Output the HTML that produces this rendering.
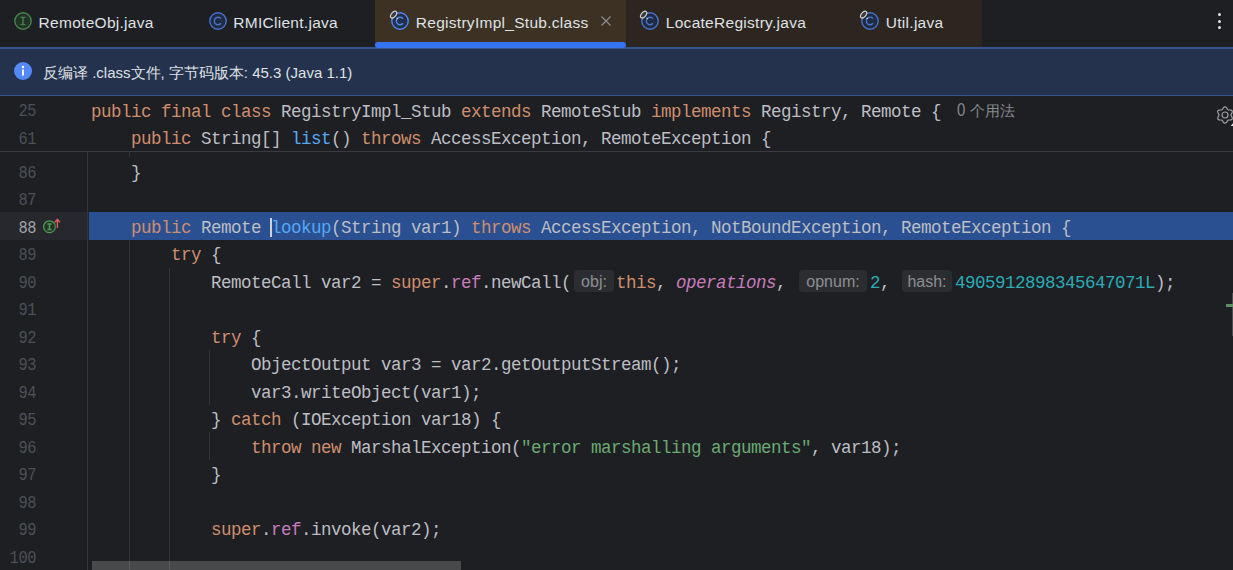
<!DOCTYPE html>
<html><head><meta charset="utf-8"><style>
html,body{margin:0;padding:0}
body{width:1233px;height:570px;overflow:hidden;background:#1e1f22;position:relative;font-family:"Liberation Sans",sans-serif}
.abs{position:absolute}
.tabt{position:absolute;top:12.6px;font-size:15.5px;letter-spacing:0.28px;line-height:19px;color:#dfe1e5;white-space:pre}
.row{position:absolute;left:91px;height:27.5px;line-height:27.5px;font-family:"Liberation Mono",monospace;font-size:17.5px;letter-spacing:-0.502px;color:#bcbec4;white-space:pre}
.ln{position:absolute;left:0;width:36px;text-align:right;height:27.5px;line-height:27.5px;font-family:"Liberation Mono",monospace;font-size:17.5px;letter-spacing:-0.502px;color:#4b5059;white-space:pre}
.ln.cur{color:#a1a3ab}
.ln span.d{display:inline-block;transform:scaleX(0.88);transform-origin:100% 50%}
.inl{display:inline-block;vertical-align:top;margin-top:0px;height:22px;line-height:23.6px;border-radius:4px;background:#2b2d30;color:#8c8f94;font-family:"Liberation Sans",sans-serif;font-size:16px;letter-spacing:0;text-align:center}
.usage{position:relative;top:-1px;font-family:"Liberation Sans",sans-serif;font-size:15px;letter-spacing:0;color:#868a91;margin-left:16px}
</style></head><body>
<!-- tab bar -->
<div class="abs" style="left:375px;top:0;width:251px;height:47px;background:#3d3124"></div>
<div class="abs" style="left:626px;top:0;width:356px;height:47px;background:#2d2620"></div>

<svg width="22" height="22" viewBox="0 0 22 22" style="position:absolute;left:12px;top:10px">
<circle cx="11" cy="11" r="8.2" fill="#223225" stroke="#47834e" stroke-width="1.4"/>
<path d="M8.6 7.4 H13.4 M11 7.4 V14.6 M8.6 14.6 H13.4" fill="none" stroke="#47834e" stroke-width="1.4"/>
</svg><div class="tabt" style="left:38.6px">RemoteObj.java</div><svg width="22" height="22" viewBox="0 0 22 22" style="position:absolute;left:207px;top:10px">
<circle cx="11" cy="11" r="8.2" fill="#202a40" stroke="#4673cb" stroke-width="1.4"/>
<path d="M13.92 8.72 A3.7 3.7 0 1 0 13.92 13.28" fill="none" stroke="#4673cb" stroke-width="1.45"/>
</svg><div class="tabt" style="left:233.3px">RMIClient.java</div><svg width="22" height="22" viewBox="0 0 22 22" style="position:absolute;left:389px;top:10px">
<circle cx="11" cy="11" r="8.2" fill="#24304a" stroke="#4f86f0" stroke-width="1.4"/>
<path d="M13.92 8.72 A3.7 3.7 0 1 0 13.92 13.28" fill="none" stroke="#4f86f0" stroke-width="1.45"/>
<ellipse cx="4.6" cy="4.6" rx="4.0" ry="2.3" transform="rotate(-48 4.6 4.6)" fill="#3b3b3d" stroke="#d0d2d6" stroke-width="1.2"/><path d="M7.2 7.6 L9.4 8.2 L8.0 9.6 Z" fill="#d0d2d6"/></svg><div class="tabt" style="left:415.8px">RegistryImpl_Stub.class</div><svg width="22" height="22" viewBox="0 0 22 22" style="position:absolute;left:639px;top:10px">
<circle cx="11" cy="11" r="8.2" fill="#202a40" stroke="#4673cb" stroke-width="1.4"/>
<path d="M13.92 8.72 A3.7 3.7 0 1 0 13.92 13.28" fill="none" stroke="#4673cb" stroke-width="1.45"/>
<ellipse cx="4.6" cy="4.6" rx="4.0" ry="2.3" transform="rotate(-48 4.6 4.6)" fill="#3b3b3d" stroke="#d0d2d6" stroke-width="1.2"/><path d="M7.2 7.6 L9.4 8.2 L8.0 9.6 Z" fill="#d0d2d6"/></svg><div class="tabt" style="left:665.8px">LocateRegistry.java</div><svg width="22" height="22" viewBox="0 0 22 22" style="position:absolute;left:859px;top:10px">
<circle cx="11" cy="11" r="8.2" fill="#202a40" stroke="#4673cb" stroke-width="1.4"/>
<path d="M13.92 8.72 A3.7 3.7 0 1 0 13.92 13.28" fill="none" stroke="#4673cb" stroke-width="1.45"/>
<ellipse cx="4.6" cy="4.6" rx="4.0" ry="2.3" transform="rotate(-48 4.6 4.6)" fill="#3b3b3d" stroke="#d0d2d6" stroke-width="1.2"/><path d="M7.2 7.6 L9.4 8.2 L8.0 9.6 Z" fill="#d0d2d6"/></svg><div class="tabt" style="left:885.8px">Util.java</div>
<svg class="abs" style="left:600px;top:15px" width="12" height="12" viewBox="0 0 12 12"><path d="M1.5 1.5 L10.5 10.5 M10.5 1.5 L1.5 10.5" stroke="#8c8f94" stroke-width="1.1"/></svg>
<div class="abs" style="left:1218.2px;top:13.2px;width:3px;height:3px;border-radius:1.5px;background:#dfe1e5"></div>
<div class="abs" style="left:1218.2px;top:19.5px;width:3px;height:3px;border-radius:1.5px;background:#dfe1e5"></div>
<div class="abs" style="left:1218.2px;top:25.7px;width:3px;height:3px;border-radius:1.5px;background:#dfe1e5"></div>
<!-- banner -->
<div class="abs" style="left:0;top:47px;width:1233px;height:2px;background:#35538f"></div>
<div class="abs" style="left:0;top:49px;width:1233px;height:46px;background:#25324d"></div>
<div class="abs" style="left:0;top:95px;width:1233px;height:1px;background:#35538f"></div>
<div class="abs" style="left:375px;top:42px;width:251px;height:6px;background:#3574f0;border-radius:3px"></div>
<svg class="abs" style="left:14px;top:62px" width="18" height="18" viewBox="0 0 18 18"><circle cx="9" cy="9" r="9" fill="#548af7"/><rect x="8" y="7.5" width="2" height="6" fill="#fff"/><circle cx="9" cy="5" r="1.2" fill="#fff"/></svg>
<div class="abs" style="left:43px;top:63px;font-size:15px;line-height:19px;color:#dfe1e5;white-space:pre">反编译 .class文件, 字节码版本: 45.3 (Java 1.1)</div>
<!-- editor -->
<div class="abs" style="left:0;top:151px;width:1233px;height:1px;background:#393b40"></div>
<div style="position:absolute;left:87px;top:152px;width:1px;height:418px;background:#313438"></div><div style="position:absolute;left:129px;top:152px;width:1px;height:5px;background:#313438"></div><div style="position:absolute;left:129px;top:240px;width:1px;height:330px;background:#313438"></div><div style="position:absolute;left:169px;top:268px;width:1px;height:302px;background:#313438"></div><div style="position:absolute;left:209px;top:350px;width:1px;height:55px;background:#313438"></div><div style="position:absolute;left:209px;top:432px;width:1px;height:28px;background:#313438"></div>
<div class="abs" style="left:0;top:212px;width:87px;height:28px;background:#26282e"></div>
<div class="abs" style="left:88px;top:212px;width:1px;height:28px;background:#26282e"></div>
<div class="abs" style="left:89px;top:212px;width:1144px;height:28px;background:#2a5091"></div>
<div class="ln" style="top:97.59px"><span class="d">25</span></div><div class="ln" style="top:125.59px"><span class="d">61</span></div><div class="ln" style="top:159.59px"><span class="d">86</span></div><div class="ln" style="top:187.09px"><span class="d">87</span></div><div class="ln cur" style="top:214.59px"><span class="d">88</span></div><div class="ln" style="top:242.09px"><span class="d">89</span></div><div class="ln" style="top:269.59px"><span class="d">90</span></div><div class="ln" style="top:297.09px"><span class="d">91</span></div><div class="ln" style="top:324.59px"><span class="d">92</span></div><div class="ln" style="top:352.09px"><span class="d">93</span></div><div class="ln" style="top:379.59px"><span class="d">94</span></div><div class="ln" style="top:407.09px"><span class="d">95</span></div><div class="ln" style="top:434.59px"><span class="d">96</span></div><div class="ln" style="top:462.09px"><span class="d">97</span></div><div class="ln" style="top:489.59px"><span class="d">98</span></div><div class="ln" style="top:517.09px"><span class="d">99</span></div><div class="ln" style="top:544.59px"><span class="d">100</span></div>
<div class="row" style="top:97.59px"><span style="color:#cf8e6d">public</span> <span style="color:#cf8e6d">final</span> <span style="color:#cf8e6d">class</span> RegistryImpl_Stub <span style="color:#cf8e6d">extends</span> RemoteStub <span style="color:#cf8e6d">implements</span> Registry, Remote {<span class="usage"><span style="display:inline-block;line-height:15px;transform:scaleY(1.18);transform-origin:50% 83%">0</span> 个用法</span></div><div class="row" style="top:125.59px">    <span style="color:#cf8e6d">public</span> String[] <span style="color:#56a8f5">list</span>() <span style="color:#cf8e6d">throws</span> AccessException, RemoteException {</div><div class="row" style="top:159.59px">    }</div><div class="row" style="top:187.09px"></div><div class="row" style="top:214.59px">    <span style="color:#cf8e6d">public</span> Remote <span style="color:#56a8f5">lookup</span>(String var1) <span style="color:#cf8e6d">throws</span> AccessException, NotBoundException, RemoteException {</div><div class="row" style="top:242.09px">        <span style="color:#cf8e6d">try</span> {</div><div class="row" style="top:269.59px">            RemoteCall var2 = <span style="color:#cf8e6d">super</span>.<span style="color:#c77dbb">ref</span>.newCall(<span class="inl" style="width:40px;margin-left:3px;margin-right:2px">obj:</span><span style="color:#cf8e6d">this</span>, <span style="color:#c77dbb;font-style:italic">operations</span>, <span class="inl" style="width:68px;margin-left:3px;margin-right:3px">opnum:</span><span style="color:#2aacb8">2</span>, <span class="inl" style="width:50px;margin-left:2px;margin-right:3px">hash:</span><span style="color:#2aacb8">4905912898345647071L</span>);</div><div class="row" style="top:297.09px"></div><div class="row" style="top:324.59px">            <span style="color:#cf8e6d">try</span> {</div><div class="row" style="top:352.09px">                ObjectOutput var3 = var2.getOutputStream();</div><div class="row" style="top:379.59px">                var3.writeObject(var1);</div><div class="row" style="top:407.09px">            } <span style="color:#cf8e6d">catch</span> (IOException var18) {</div><div class="row" style="top:434.59px">                <span style="color:#cf8e6d">throw</span> <span style="color:#cf8e6d">new</span> MarshalException(<span style="color:#6aab73">&quot;error marshalling arguments&quot;</span>, var18);</div><div class="row" style="top:462.09px">            }</div><div class="row" style="top:489.59px"></div><div class="row" style="top:517.09px">            <span style="color:#cf8e6d">super</span>.<span style="color:#c77dbb">ref</span>.invoke(var2);</div><div class="row" style="top:544.59px"></div>
<div class="abs" style="left:270px;top:218px;width:2px;height:19px;background:#ced0d6"></div>
<svg class="abs" style="left:42px;top:217px" width="20" height="18" viewBox="0 0 20 18"><circle cx="7.5" cy="9.7" r="5.9" fill="#243526" stroke="#4f9a57" stroke-width="1.3"/><path d="M5.4 6.9 H9.6 M7.5 6.9 V12.5 M5.4 12.5 H9.6" stroke="#4f9a57" stroke-width="1.5" fill="none"/><path d="M15.4 11 V2.6 M12.8 5.2 L15.4 2.4 L18 5.2" stroke="#26282e" stroke-width="3.2" fill="none"/><path d="M15.4 11 V2.6 M12.8 5.2 L15.4 2.4 L18 5.2" stroke="#db5c5c" stroke-width="1.4" fill="none"/></svg>
<!-- gear -->
<svg class="abs" style="left:1215px;top:105px" width="20" height="20" viewBox="0 0 20 20"><path d="M16.00 10.00 L16.12 10.54 L16.45 11.14 L16.86 11.84 L17.19 12.62 L17.30 13.40 L17.10 14.10 L16.60 14.62 L15.86 14.92 L15.02 15.02 L14.21 15.02 L13.53 15.04 L13.00 15.20 L12.60 15.57 L12.24 16.15 L11.84 16.86 L11.33 17.53 L10.70 18.02 L10.00 18.20 L9.30 18.02 L8.67 17.53 L8.16 16.86 L7.76 16.15 L7.40 15.57 L7.00 15.20 L6.47 15.04 L5.79 15.02 L4.98 15.02 L4.14 14.92 L3.40 14.62 L2.90 14.10 L2.70 13.40 L2.81 12.62 L3.14 11.84 L3.55 11.14 L3.88 10.54 L4.00 10.00 L3.88 9.46 L3.55 8.86 L3.14 8.16 L2.81 7.38 L2.70 6.60 L2.90 5.90 L3.40 5.38 L4.14 5.08 L4.98 4.98 L5.79 4.98 L6.47 4.96 L7.00 4.80 L7.40 4.43 L7.76 3.85 L8.16 3.14 L8.67 2.47 L9.30 1.98 L10.00 1.80 L10.70 1.98 L11.33 2.47 L11.84 3.14 L12.24 3.85 L12.60 4.43 L13.00 4.80 L13.53 4.96 L14.21 4.98 L15.02 4.98 L15.86 5.08 L16.60 5.38 L17.10 5.90 L17.30 6.60 L17.19 7.38 L16.86 8.16 L16.45 8.86 L16.12 9.46 Z" fill="none" stroke="#9da0a5" stroke-width="1.2"/><circle cx="10" cy="10" r="3.0" fill="none" stroke="#9da0a5" stroke-width="1.2"/></svg>
<svg class="abs" style="left:1229px;top:121px" width="4" height="6" viewBox="0 0 4 6"><path d="M4 2.2 L4 5 L1.6 5 Z" fill="#dfe1e5"/></svg>
<!-- right markers -->
<div class="abs" style="left:1232px;top:293px;width:1px;height:43px;background:#4a4c50"></div>
<div class="abs" style="left:1226px;top:304px;width:7px;height:3px;background:#5e8f63"></div>
<!-- scrollbar -->
<div class="abs" style="left:92px;top:561px;width:369px;height:9px;background:rgba(255,255,255,0.19)"></div>
</body></html>
